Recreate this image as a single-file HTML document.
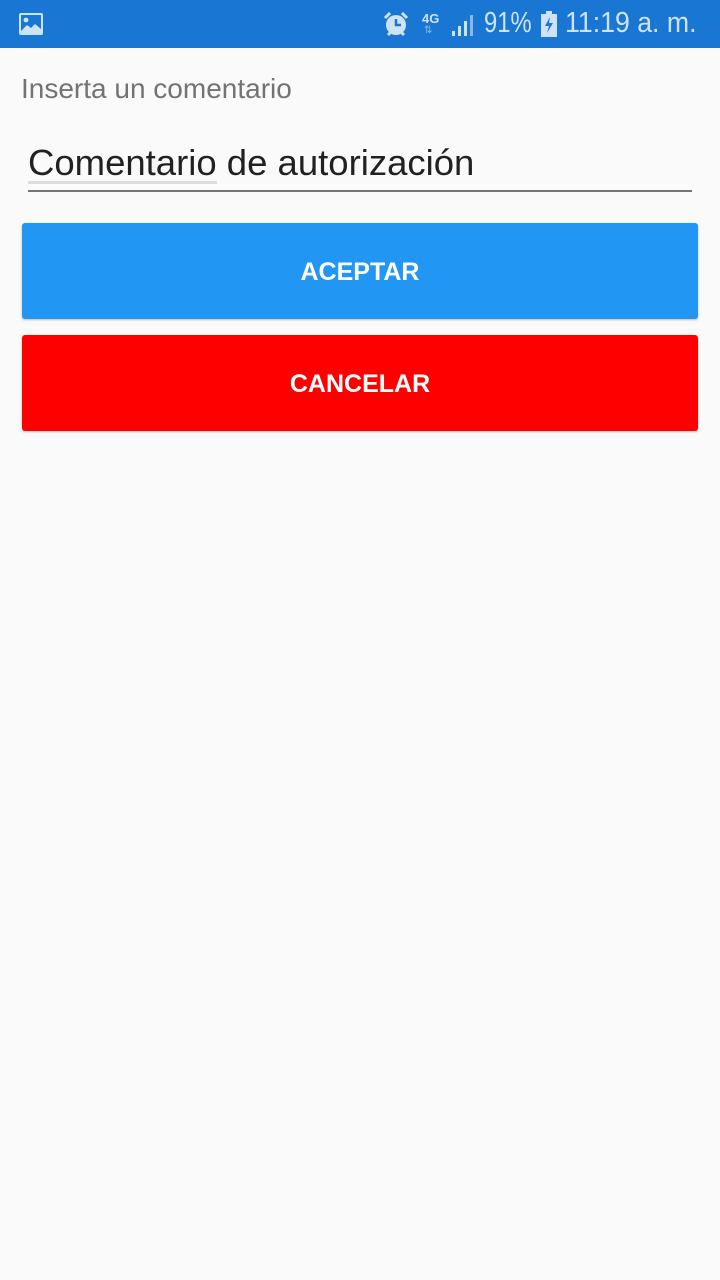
<!DOCTYPE html>
<html><head><meta charset="utf-8"><style>
*{margin:0;padding:0;box-sizing:border-box}
body{width:720px;height:1280px;background:#fafafa;font-family:"Liberation Sans",sans-serif;position:relative;overflow:hidden}
.sb{position:absolute;left:0;top:0;width:720px;height:48px;background:#1976d2;color:#cfe3f7}
.abs{position:absolute}
.lbl{left:21px;top:73px;font-size:28px;color:#737373}
.inp{left:28px;top:142px;font-size:36.5px;color:#212121}
.btn{position:absolute;left:22px;width:676px;height:96px;border-radius:3px;color:#fff;font-size:25px;font-weight:bold;text-align:center;line-height:98px;box-shadow:0 1px 2px rgba(0,0,0,.25)}
</style></head><body>
<div class="sb">
<svg class="abs" style="left:19px;top:13px" width="24" height="22" viewBox="0 0 24 22"><rect x="0" y="0" width="24" height="22" rx="2" fill="#cfe3f7"/><rect x="2" y="2" width="20" height="18" fill="#1976d2"/><circle cx="7" cy="7" r="2.4" fill="#cfe3f7"/><path d="M2 18 L8 12 L12 15 L16 11 L22 16 L22 20 L2 20Z" fill="#cfe3f7"/></svg>
<svg class="abs" style="left:383px;top:11px" width="26" height="26" viewBox="0 0 26 26"><circle cx="13" cy="14" r="10" fill="#cfe3f7"/><path d="M2 7 L7 2 M19 2 L24 7" stroke="#cfe3f7" stroke-width="3"/><path d="M13 8 V14 H18" stroke="#1976d2" stroke-width="2.5" fill="none"/><path d="M5 24 L8 21 M21 24 L18 21" stroke="#cfe3f7" stroke-width="3"/></svg>
<div class="abs" style="left:422px;top:11px;font-size:13px;font-weight:bold">4G</div>
<div class="abs" style="left:424px;top:25px;font-size:10px;color:#8fb6e0">⇅</div>
<svg class="abs" style="left:450px;top:13px" width="26" height="24" viewBox="0 0 26 24"><rect x="2" y="18" width="3" height="5" fill="#cfe3f7"/><rect x="8" y="13" width="3" height="10" fill="#cfe3f7"/><rect x="14" y="8" width="3" height="15" fill="#cfe3f7"/><rect x="20" y="2" width="3" height="21" fill="#8fb6e0"/></svg>
<div class="abs" style="left:484px;top:7px;font-size:29px;transform:scaleX(.82);transform-origin:left">91%</div>
<svg class="abs" style="left:540px;top:11px" width="18" height="26" viewBox="0 0 18 26"><rect x="6" y="0" width="6" height="3" fill="#cfe3f7"/><rect x="1" y="3" width="16" height="23" fill="#cfe3f7"/><path d="M10 6 L5 15 H9 L7 22 L13 12 H9 Z" fill="#1976d2"/></svg>
<div class="abs" style="left:565px;top:7px;font-size:29px;transform:scaleX(.92);transform-origin:left">11:19 a. m.</div>
</div>
<div class="abs lbl">Inserta un comentario</div>
<div class="abs inp">Comentario de autorización</div>
<div class="abs" style="left:28px;top:181px;width:189px;height:3px;background:#ddd"></div>
<div class="abs" style="left:28px;top:190px;width:664px;height:2px;background:#757575"></div>
<div class="btn" style="top:223px;background:#2196f3">ACEPTAR</div>
<div class="btn" style="top:335px;background:#ff0000">CANCELAR</div>
</body></html>
